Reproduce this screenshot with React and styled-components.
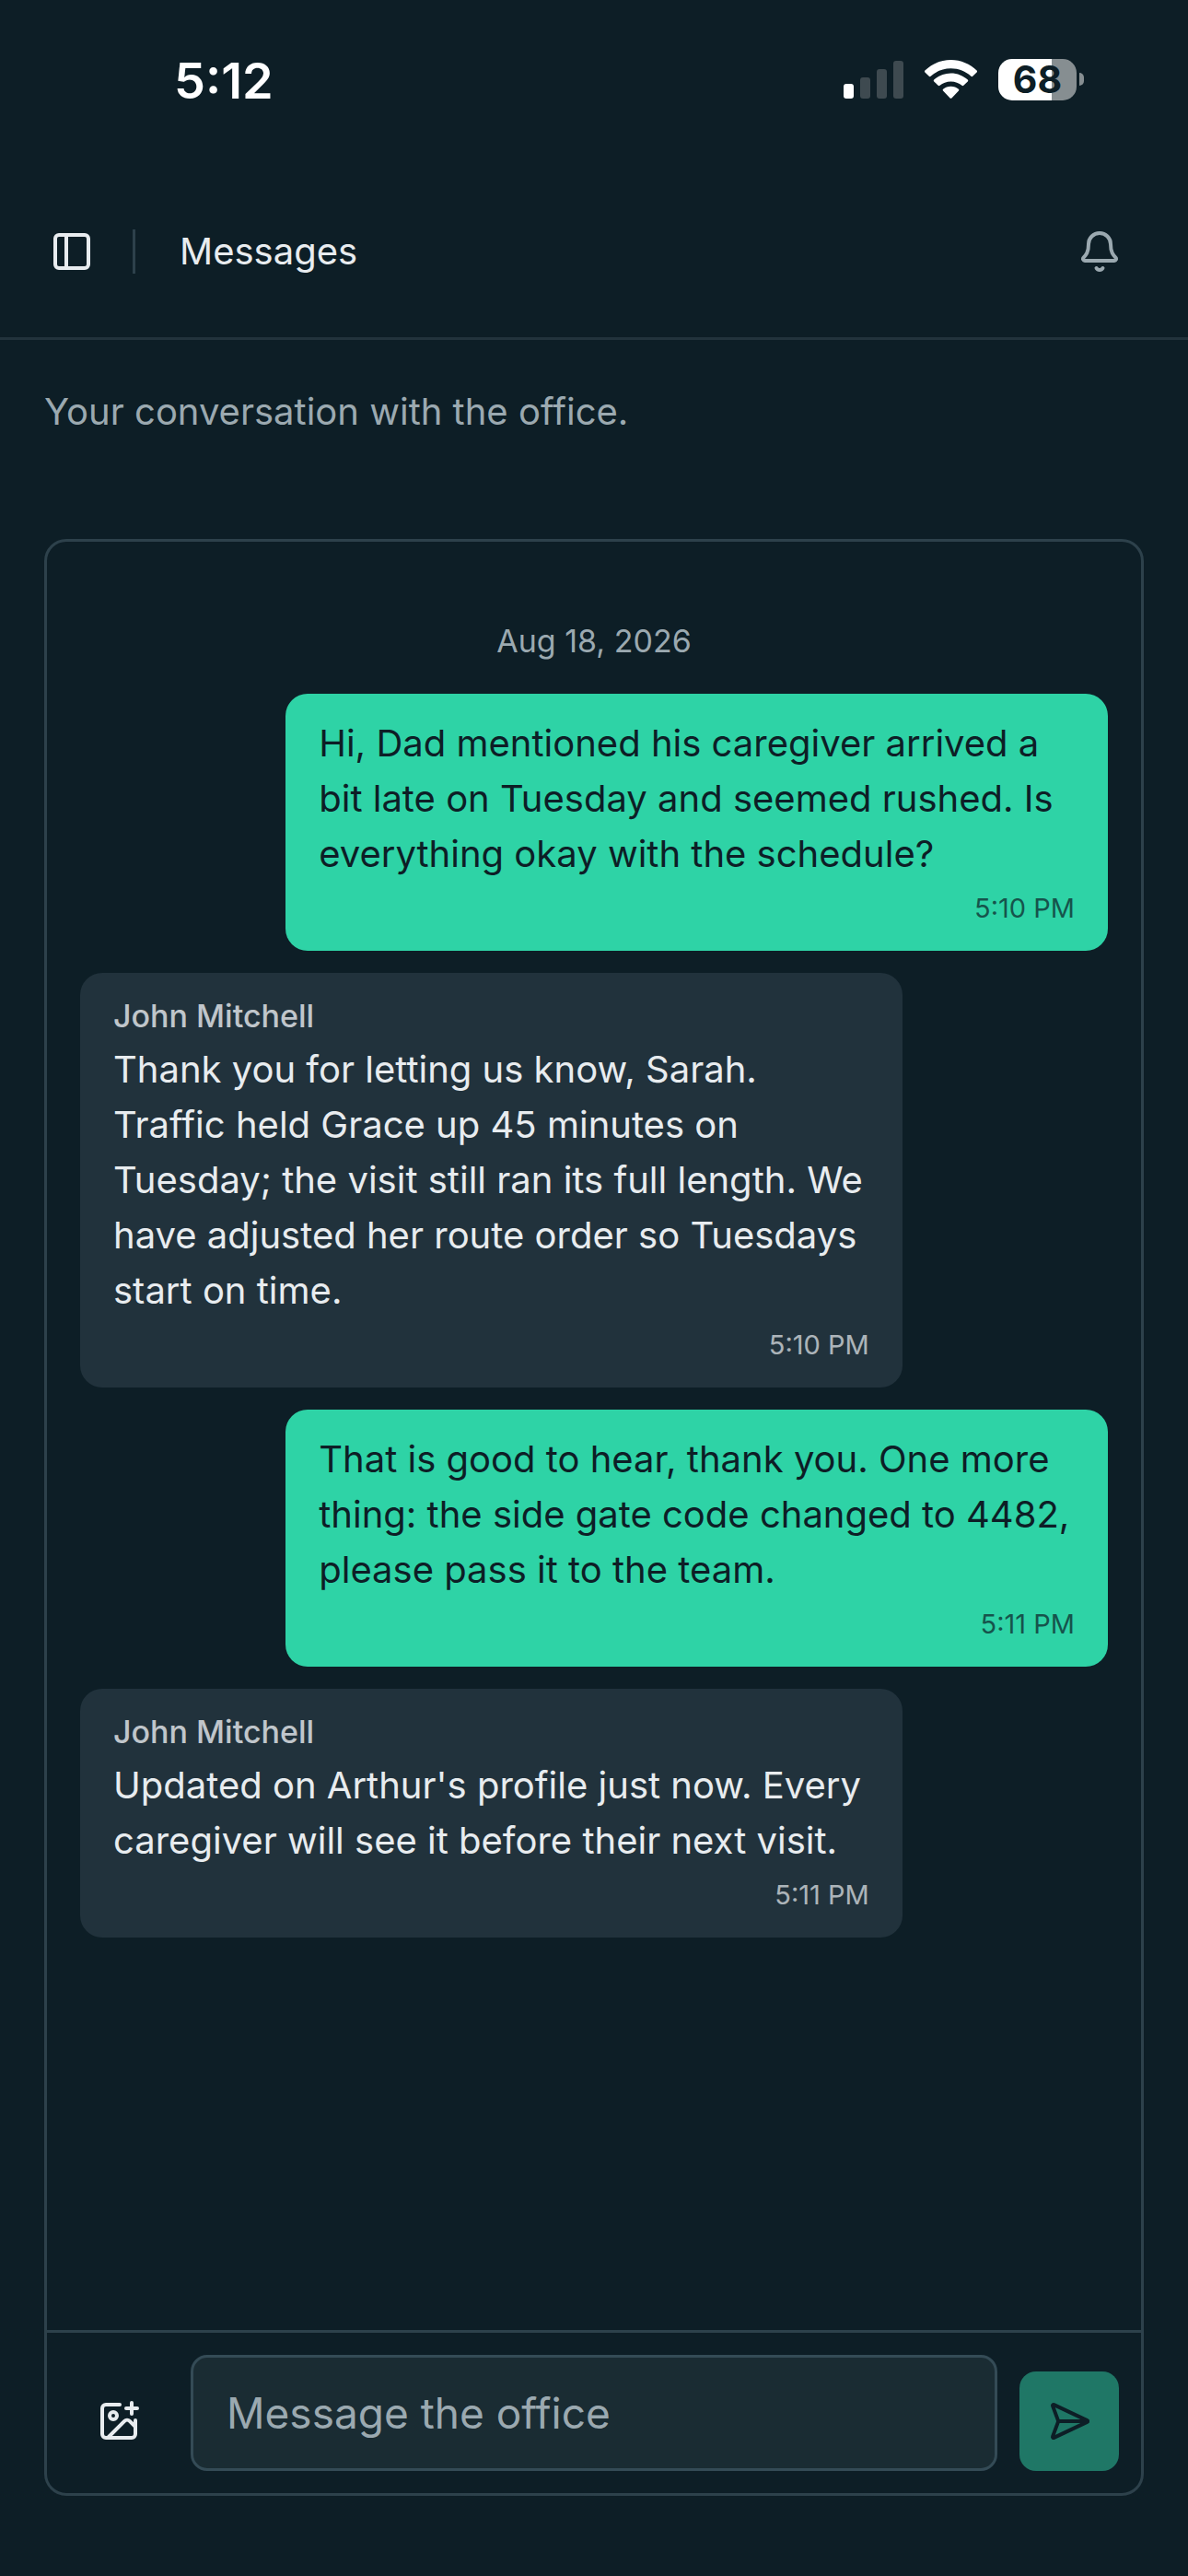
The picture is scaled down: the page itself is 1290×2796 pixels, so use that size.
import React, { useState } from 'react';
import styled, { createGlobalStyle } from 'styled-components';
import { Bell, ImagePlus, PanelLeft, SendHorizontal } from 'lucide-react';

const GlobalStyle = createGlobalStyle`
  * {
    box-sizing: border-box;
  }

  body {
    margin: 0;
    background-color: #0d1e26;
    color: #e8ecef;
    font-family: Inter, 'Liberation Sans', sans-serif;
    font-size: 40px;
    line-height: 60px;
  }
`;

const Page = styled.div`
  display: flex;
  flex-direction: column;
  min-height: 100vh;
`;

const StatusBar = styled.div`
  display: flex;
  align-items: center;
  justify-content: space-between;
  height: 180px;
  padding: 0 113px 8px 189px;
  color: #fff;
`;

const Clock = styled.time`
  padding-top: 4px;
  font-size: 54px;
  font-weight: 600;
`;

const StatusIcons = styled.div`
  display: flex;
  align-items: center;
  gap: 23px;
`;

const Battery = styled.div`
  display: flex;
  align-items: center;
  gap: 3px;
`;

const BatteryBody = styled.div`
  width: 85px;
  height: 45px;
  border-radius: 15px;
  background: linear-gradient(to right, #fff 68%, #868e91 68%);
  color: #0d1e26;
  font-size: 41px;
  font-weight: 700;
  line-height: 45px;
  text-align: center;
`;

const BatteryTip = styled.div`
  width: 5px;
  height: 14px;
  border-radius: 0 5px 5px 0;
  background-color: #868e91;
`;

const Header = styled.header`
  display: flex;
  align-items: center;
  height: 189px;
  padding: 0 72px 0 54px;
  border-bottom: 3px solid #22333c;
`;

const IconButton = styled.button`
  display: flex;
  align-items: center;
  justify-content: center;
  width: ${props => props.$size || 48}px;
  height: ${props => props.$size || 48}px;
  padding: 0;
  border: none;
  background: none;
  color: ${props => (props.$muted ? '#9ba9b0' : '#e8ecef')};
  cursor: pointer;
`;

const Divider = styled.div`
  width: 3px;
  height: 48px;
  margin: 0 48px 0 42px;
  background-color: #2d414b;
`;

const Title = styled.h1`
  flex: 1;
  margin: 0;
  font-size: 40px;
  font-weight: 400;
`;

const Main = styled.main`
  flex: 1;
  display: flex;
  flex-direction: column;
  gap: 108px;
  padding: 48px 48px 87px;
`;

const Subtitle = styled.p`
  margin: 0;
  color: #9ba9b0;
`;

const Panel = styled.section`
  flex: 1;
  display: flex;
  flex-direction: column;
  border: 3px solid #2d414b;
  border-radius: 24px;
`;

const MessageList = styled.div`
  flex: 1;
  display: flex;
  flex-direction: column;
  gap: 24px;
  padding: 84px 36px 36px;
`;

const DateLabel = styled.div`
  margin-bottom: 9px;
  color: #9ba9b0;
  font-size: 34px;
  line-height: 48px;
  text-align: center;
`;

const Bubble = styled.article`
  align-self: ${props => (props.$own ? 'flex-end' : 'flex-start')};
  width: 80%;
  padding: 24px 36px;
  border-radius: 24px;
  background-color: ${props => (props.$own ? '#2ed3a6' : '#21323c')};
  color: ${props => (props.$own ? '#0d1e26' : '#e8ecef')};
`;

const Sender = styled.div`
  margin-bottom: 6px;
  font-size: 34px;
  font-weight: 500;
  line-height: 45px;
  opacity: 0.8;
`;

const Text = styled.p`
  margin: 0;
`;

const SentAt = styled.time`
  display: block;
  margin-top: 6px;
  font-size: 29px;
  line-height: 45px;
  text-align: right;
  opacity: 0.7;
`;

const Composer = styled.form`
  display: flex;
  align-items: flex-end;
  gap: 24px;
  padding: 24px;
  border-top: 3px solid #2d414b;
`;

const MessageInput = styled.input`
  flex: 1;
  min-width: 0;
  height: 126px;
  padding: 0 36px;
  border: 3px solid #344b56;
  border-radius: 18px;
  background-color: #1a2c33;
  color: #e8ecef;
  font-family: inherit;
  font-size: 46px;
  outline: none;

  &::placeholder {
    color: #9ba9b0;
    opacity: 1;
  }
`;

const SendButton = styled(IconButton)`
  border-radius: 18px;
  background-color: #1f7766;
  color: #0d1e26;
`;

const messages = [
  {
    id: 1,
    own: true,
    text: 'Hi, Dad mentioned his caregiver arrived a bit late on Tuesday and seemed rushed. Is everything okay with the schedule?',
    time: '5:10 PM'
  },
  {
    id: 2,
    sender: 'John Mitchell',
    text: 'Thank you for letting us know, Sarah. Traffic held Grace up 45 minutes on Tuesday; the visit still ran its full length. We have adjusted her route order so Tuesdays start on time.',
    time: '5:10 PM'
  },
  {
    id: 3,
    own: true,
    text: 'That is good to hear, thank you. One more thing: the side gate code changed to 4482, please pass it to the team.',
    time: '5:11 PM'
  },
  {
    id: 4,
    sender: 'John Mitchell',
    text: "Updated on Arthur's profile just now. Every caregiver will see it before their next visit.",
    time: '5:11 PM'
  }
];

const SignalIcon = () => (
  <svg width="65" height="43" viewBox="0 0 65 43" aria-hidden="true">
    <rect x="0" y="26" width="11" height="16" rx="3" fill="#fff" />
    <rect x="18" y="19" width="11" height="23" rx="3" fill="#3e4a50" />
    <rect x="36" y="10" width="11" height="32" rx="3" fill="#3e4a50" />
    <rect x="54" y="1" width="11" height="41" rx="3" fill="#3e4a50" />
  </svg>
);

const WifiIcon = () => (
  <svg width="57" height="43" viewBox="0 0 57 43" fill="#fff" aria-hidden="true">
    <path d="M28.5 0C39.5 0 49.5 4.5 56.6 11.6Q57.5 12.6 56.6 13.5L52.2 17.8Q51.3 18.6 50.4 17.8C44.6 12.5 37 9.3 28.5 9.3S12.4 12.5 6.6 17.8Q5.7 18.6 4.8 17.8L.4 13.5Q-.5 12.6 .4 11.6C7.5 4.5 17.5 0 28.5 0Z" />
    <path d="M28.5 14.5C35.6 14.5 42 17.2 46.8 21.6Q47.7 22.5 46.8 23.4L42.3 27.8Q41.4 28.6 40.5 27.8C37.3 25 33.1 23.4 28.5 23.4S19.7 25 16.5 27.8Q15.6 28.6 14.7 27.8L10.2 23.4Q9.3 22.5 10.2 21.6C15 17.2 21.4 14.5 28.5 14.5Z" />
    <path d="M28.5 28.8C31.7 28.8 34.6 29.9 36.9 31.8Q37.9 32.7 37 33.6L29.4 41.4Q28.5 42.3 27.6 41.4L20 33.6Q19.1 32.7 20.1 31.8C22.4 29.9 25.3 28.8 28.5 28.8Z" />
  </svg>
);

const App = () => {
  const [draft, setDraft] = useState('');

  const handleSubmit = (e) => {
    e.preventDefault();
    setDraft('');
  };

  return (
    <>
      <GlobalStyle />
      <Page>
        <StatusBar>
          <Clock>5:12</Clock>
          <StatusIcons>
            <SignalIcon />
            <WifiIcon />
            <Battery>
              <BatteryBody>68</BatteryBody>
              <BatteryTip />
            </Battery>
          </StatusIcons>
        </StatusBar>

        <Header>
          <IconButton type="button" aria-label="Toggle sidebar">
            <PanelLeft size={48} />
          </IconButton>
          <Divider />
          <Title>Messages</Title>
          <IconButton type="button" aria-label="Notifications" $muted>
            <Bell size={48} />
          </IconButton>
        </Header>

        <Main>
          <Subtitle>Your conversation with the office.</Subtitle>
          <Panel>
            <MessageList>
              <DateLabel>Aug 18, 2026</DateLabel>
              {messages.map(message => (
                <Bubble key={message.id} $own={message.own}>
                  {message.sender && <Sender>{message.sender}</Sender>}
                  <Text>{message.text}</Text>
                  <SentAt>{message.time}</SentAt>
                </Bubble>
              ))}
            </MessageList>
            <Composer onSubmit={handleSubmit}>
              <IconButton type="button" aria-label="Attach an image" $size={108}>
                <ImagePlus size={48} />
              </IconButton>
              <MessageInput
                type="text"
                aria-label="Message the office"
                placeholder="Message the office"
                value={draft}
                onChange={(e) => setDraft(e.target.value)}
              />
              <SendButton type="submit" aria-label="Send message" $size={108}>
                <SendHorizontal size={48} />
              </SendButton>
            </Composer>
          </Panel>
        </Main>
      </Page>
    </>
  );
};

export default App;
